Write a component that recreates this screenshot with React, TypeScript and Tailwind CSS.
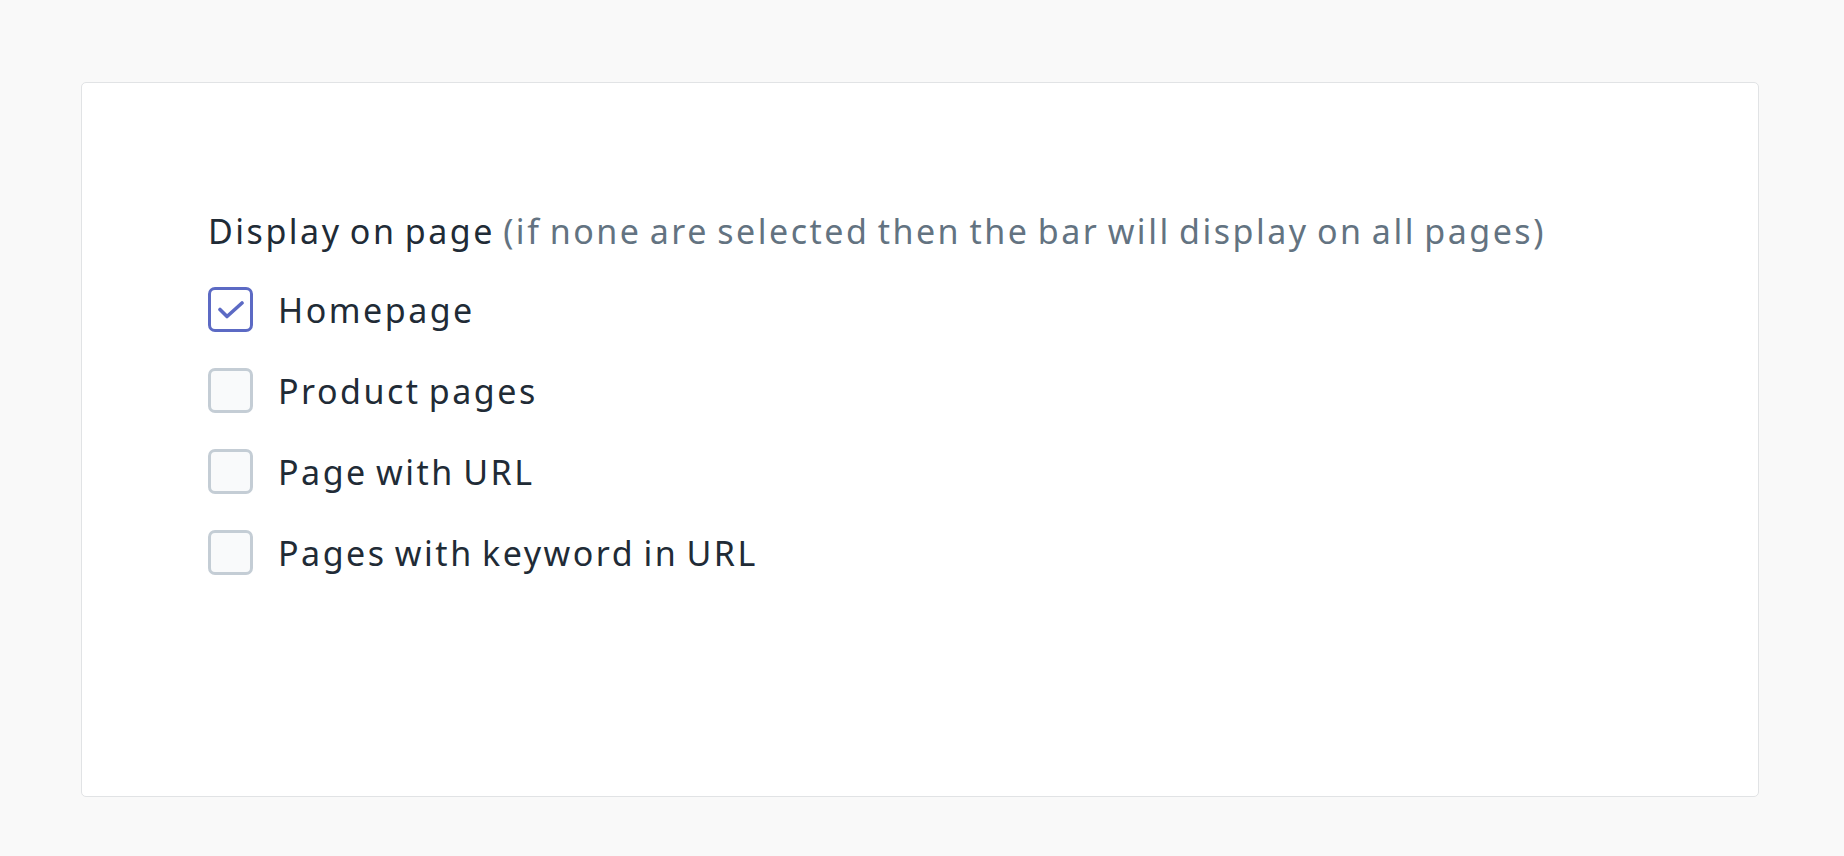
import React, { useState } from 'react';

const options = ['Homepage', 'Product pages', 'Page with URL', 'Pages with keyword in URL'];

const Checkbox: React.FC<{ checked: boolean; onToggle: () => void }> = ({ checked, onToggle }) => (
    <button
        type="button"
        onClick={onToggle}
        className={`w-[45px] h-[45px] shrink-0 rounded-[7px] border-[3px] flex items-center justify-center ${checked ? 'border-[#5c6ac4] bg-white' : 'border-[#c4cdd5] bg-[#f9fafb]'}`}
    >
        {checked && (
            <svg width="26" height="18" viewBox="0 0 26 18" fill="none" stroke="#5c6ac4" strokeWidth={3.6} strokeLinecap="round" strokeLinejoin="round">
                <path d="M2 8.5l7 7L24 2" />
            </svg>
        )}
    </button>
);

export default function App() {
    const [selected, setSelected] = useState<string[]>(['Homepage']);

    const toggle = (opt: string) =>
        setSelected(s => (s.includes(opt) ? s.filter(o => o !== opt) : [...s, opt]));

    return (
        <div className="min-h-screen bg-[#f9f9f9] pt-[82px] pl-[81px] pr-[85px] font-['Segoe_UI','Noto_Sans',sans-serif]">
            <div className="h-[715px] bg-white border border-[#e1e3e5] rounded-[5px] pl-[126px] pt-[126px]">
                <div className="text-[34px] leading-[44px] tracking-[2.5px] [word-spacing:-3px] text-[#212b36]">
                    Display on page <span className="text-[#637381]">(if none are selected then the bar will display on all pages)</span>
                </div>
                <div className="mt-[34px] flex flex-col gap-[36px]">
                    {options.map(opt => (
                        <label key={opt} className="flex items-center gap-[25px] h-[45px] cursor-pointer">
                            <Checkbox checked={selected.includes(opt)} onToggle={() => toggle(opt)} />
                            <span className="text-[34px] leading-[44px] tracking-[2.5px] [word-spacing:-3px] text-[#212b36]">{opt}</span>
                        </label>
                    ))}
                </div>
            </div>
        </div>
    );
}
